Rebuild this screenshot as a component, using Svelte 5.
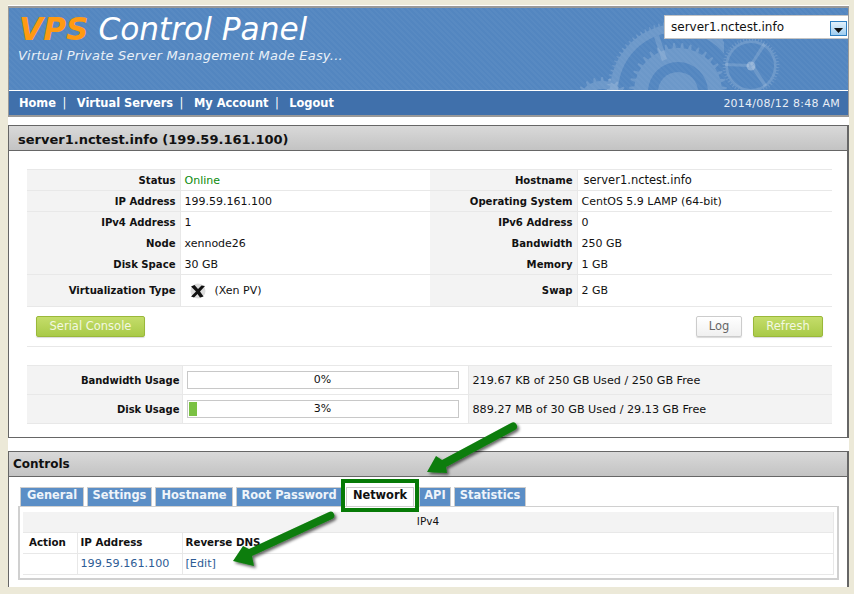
<script>
  const info = [
    { a: 'Status', b: 'Online', c: 'Hostname', d: 'server1.nctest.info', line: true, online: true, wide: true },
    { a: 'IP Address', b: '199.59.161.100', c: 'Operating System', d: 'CentOS 5.9 LAMP (64-bit)', line: true },
    { a: 'IPv4 Address', b: '1', c: 'IPv6 Address', d: '0' },
    { a: 'Node', b: 'xennode26', c: 'Bandwidth', d: '250 GB' },
    { a: 'Disk Space', b: '30 GB', c: 'Memory', d: '1 GB', line: true }
  ];

  const usage = [
    { label: 'Bandwidth Usage', pct: 0, text: '219.67 KB of 250 GB Used / 250 GB Free' },
    { label: 'Disk Usage', pct: 3, text: '889.27 MB of 30 GB Used / 29.13 GB Free' }
  ];

  const tabs = [
    { name: 'General', width: 64 },
    { name: 'Settings', width: 65 },
    { name: 'Hostname', width: 78 },
    { name: 'Root Password', width: 106 },
    { name: 'Network', width: 68 },
    { name: 'API', width: 32 },
    { name: 'Statistics', width: 72 }
  ];

  // toothed outline with a round hole, for the header watermark
  function gear(cx, cy, r, teeth, h, hole) {
    let d = '';
    const step = (Math.PI * 2) / teeth;
    for (let i = 0; i < teeth; i++) {
      const a = i * step;
      const pts = [
        [r - h, a],
        [r - h, a + step * 0.3],
        [r, a + step * 0.42],
        [r, a + step * 0.62],
        [r - h, a + step * 0.74]
      ];
      for (const [rad, t] of pts) {
        d += (d ? 'L' : 'M') + (cx + rad * Math.cos(t)).toFixed(1) + ' ' + (cy + rad * Math.sin(t)).toFixed(1);
      }
    }
    d += 'Z';
    d += `M${cx + hole} ${cy}A${hole} ${hole} 0 1 0 ${cx - hole} ${cy}A${hole} ${hole} 0 1 0 ${cx + hole} ${cy}Z`;
    return d;
  }
</script>

<div class="page">
  <header class="site-head">
    <div class="banner">
      <svg class="gears" width="839" height="82" viewBox="0 0 839 82" aria-hidden="true">
        <defs>
          <clipPath id="ring-clip"><rect x="560" y="0" width="164" height="100" /></clipPath>
        </defs>
        <g transform="translate(-9 -8)" fill="#fff" fill-opacity="0.15" fill-rule="evenodd">
          <path d={gear(678, 92, 71, 90, 3, 60)} clip-path="url(#ring-clip)" />
          <path d="M654 37l5-2 8 24-5 2z" />
          <path d={gear(678, 92, 49, 36, 5, 30)} />
          <circle cx="678" cy="92" r="20" />
          <path d={gear(602, 106, 29, 22, 4, 17)} />
          <path d={gear(751, 66, 28.5, 56, 3, 23)} />
          <circle cx="751" cy="66" r="4.5" fill-opacity="0.3" />
          <path d="M750 64l13-21 3 2-14 21z M725 63l24 1v3l-24-1z M751 67l3-2 13 20-3 2z" />
        </g>
      </svg>
      <h1 class="brand"><b>VPS</b> Control Panel</h1>
      <p class="tagline">Virtual Private Server Management Made Easy...</p>
      <div class="server-select">
        <span>server1.nctest.info</span>
        <i class="select-btn"><svg width="9" height="5" viewBox="0 0 9 5"><path d="M0 0h9L4.500 5z" fill="#111" /></svg></i>
      </div>
    </div>
    <nav class="topnav">
      <div class="links">
        <a href="#home">Home</a><span>|</span>
        <a href="#servers">Virtual Servers</a><span>|</span>
        <a href="#account">My Account</a><span>|</span>
        <a href="#logout">Logout</a>
      </div>
      <div class="clock">2014/08/12 8:48 AM</div>
    </nav>
  </header>

  <section class="panel server">
    <h2 class="panel-title big">server1.nctest.info (199.59.161.100)</h2>
    <div class="panel-body">
      <table class="info">
        <colgroup><col style="width: 153px" /><col style="width: 250px" /><col style="width: 147px" /><col /></colgroup>
        <tbody>
          {#each info as row}
            <tr class:line={row.line}>
              <th>{row.a}</th>
              <td class="mid" class:online={row.online}>{row.b}</td>
              <th>{row.c}</th>
              <td class:host={row.wide}>{row.d}</td>
            </tr>
          {/each}
          <tr class="line tall">
            <th>Virtualization Type</th>
            <td class="mid">
              <span class="virt">
                <svg width="16" height="16" viewBox="0 0 16 16" aria-hidden="true">
                  <circle cx="8" cy="8" r="7.500" fill="#ddd" />
                  <path d="M1 3.500 4.500 2 8 6l3.500-3.500L15 3l-5 5.500 3.500 5-3.500 1L7.500 11l-3.500 3.500-3-1 5-5z" fill="#111" />
                </svg>
                (Xen PV)
              </span>
            </td>
            <th>Swap</th>
            <td>2 GB</td>
          </tr>
        </tbody>
      </table>

      <div class="actions">
        <button class="btn green serial">Serial Console</button>
        <span class="spacer"></span>
        <button class="btn plain">Log</button>
        <button class="btn green refresh">Refresh</button>
      </div>

      <table class="usage">
        <colgroup><col style="width: 155px" /><col style="width: 286px" /><col /></colgroup>
        <tbody>
          {#each usage as u}
            <tr>
              <th>{u.label}</th>
              <td class="bar-cell">
                <div class="bar">
                  {#if u.pct > 0}<div class="fill" style="width: {u.pct}%"></div>{/if}
                  <span>{u.pct}%</span>
                </div>
              </td>
              <td class="used">{u.text}</td>
            </tr>
          {/each}
        </tbody>
      </table>
    </div>
  </section>

  <section class="panel controls">
    <h2 class="panel-title">Controls</h2>
    <div class="panel-body">
      <div class="tabs">
        {#each tabs as tab}
          <button class="tab" class:active={tab.name === 'Network'} style="width: {tab.width}px">{tab.name}</button>
        {/each}
      </div>
      <div class="tab-box">
        <table class="net">
          <colgroup><col style="width: 54px" /><col style="width: 105px" /><col /></colgroup>
          <tbody>
            <tr class="caption"><td colspan="3">IPv4</td></tr>
            <tr class="heads"><th class="c1">Action</th><th class="c2">IP Address</th><th>Reverse DNS</th></tr>
            <tr>
              <td class="c1"></td>
              <td class="c2"><a href="#ip">199.59.161.100</a></td>
              <td><a href="#edit">[Edit]</a></td>
            </tr>
          </tbody>
        </table>
      </div>
    </div>
  </section>

  <!-- annotations drawn on top of the screenshot -->
  <svg class="marks" width="854" height="594" viewBox="0 0 854 594" aria-hidden="true">
    <defs>
      <filter id="shade" x="-20%" y="-20%" width="140%" height="140%">
        <feDropShadow dx="2" dy="2" stdDeviation="1.500" flood-color="#000" flood-opacity="0.6" />
      </filter>
    </defs>
    <rect x="343" y="481" width="74" height="29" fill="none" stroke="#067a06" stroke-width="4" />
    <g fill="#0a7d0a" filter="url(#shade)">
      <path d="M427 472L436 456L442 460L511 423A3.600 3.600 0 0 1 515 430L446 467L447 473Z" />
      <path d="M233 561L243 546L249 549L329 512A3.600 3.600 0 0 1 332 519L252 556L254 566Z" />
    </g>
  </svg>
</div>

<style>
  :global(body) {
    background: #ece9d8;
    font-family: "DejaVu Sans", Verdana, sans-serif;
    font-size: 11px;
    color: #111;
  }

  .page {
    position: relative;
    box-sizing: border-box;
    width: 841px;
    height: 582px;
    margin: 5px 0 0 8px;
    padding-top: 1px;
    background: #fff;
    overflow: hidden;
  }

  .site-head {
    width: 841px;
    box-sizing: border-box;
    border: 1px solid #999;
    border-width: 2px 1px;
  }

  .banner {
    position: relative;
    box-sizing: border-box;
    height: 83px;
    padding: 7px 0 0 9px;
    overflow: hidden;
    border-bottom: 1px solid #fff;
    background-color: #5386c0;
    background-image: repeating-linear-gradient(45deg, transparent 0 2px, rgba(255, 255, 255, 0.03) 2px 4px);
  }

  .gears {
    position: absolute;
    left: 0;
    top: 0;
  }

  .brand {
    position: relative;
    margin: 0 0 0 1px;
    font-size: 31.2px;
    line-height: 28px;
    font-weight: normal;
    font-style: italic;
    color: #fff;
  }

  .brand b {
    color: #ff9a12;
  }

  .tagline {
    position: relative;
    margin: 5px 0 0;
    font-size: 13px;
    line-height: 16px;
    letter-spacing: 0.22px;
    font-style: italic;
    color: #e9f0f8;
  }

  .server-select {
    position: absolute;
    right: 0;
    top: 7px;
    box-sizing: border-box;
    display: flex;
    justify-content: space-between;
    width: 184px;
    height: 24px;
    padding: 3px 0 0 6px;
    border: 1px solid #c4c4c4;
    border-right: 0;
    background: #fff;
    font-size: 12px;
    line-height: 16px;
    color: #111;
  }

  .select-btn {
    display: flex;
    align-items: flex-end;
    justify-content: center;
    box-sizing: border-box;
    width: 17px;
    height: 15px;
    margin: 2px 1px 0 0;
    padding-bottom: 2px;
    border: 1px solid #2f7fc1;
    background: linear-gradient(#e3f1fb, #9fcdf0);
  }

  .topnav {
    display: flex;
    align-items: center;
    justify-content: space-between;
    height: 24px;
    padding: 0 8px 0 10px;
    background: #4070ab;
    color: #fff;
  }

  .links {
    font-weight: bold;
    font-size: 11.4px;
  }

  .links a {
    color: #fff;
    text-decoration: none;
  }

  .links span {
    margin: 0 6.5px;
    font-weight: normal;
  }

  .clock {
    font-size: 11px;
    letter-spacing: 0.25px;
    color: #e8eef6;
  }

  .panel {
    box-sizing: border-box;
    width: 841px;
    border: 1px solid #666;
    border-width: 1px 2px 1px 1px;
  }

  .server {
    height: 313px;
    margin-top: 8px;
  }

  .controls {
    height: 137px;
    margin-top: 13px;
    border-bottom: 0;
  }

  .panel-title {
    box-sizing: border-box;
    height: 25px;
    margin: 0;
    padding: 1px 0 0 4px;
    border-bottom: 1px solid #666;
    background: linear-gradient(#d9d9d9, #c3c3c3);
    font-size: 12px;
    line-height: 23px;
    font-weight: bold;
    color: #111;
  }

  .panel-title.big {
    padding: 2px 0 0 9px;
    font-size: 13px;
  }

  .panel-body {
    position: relative;
  }

  table {
    border-collapse: collapse;
    table-layout: fixed;
  }

  .info {
    width: 805px;
    margin: 18px 0 0 18px;
    border-top: 1px solid #e8e8e8;
  }

  .info th,
  .info td {
    height: 21px;
    padding: 0 0 0 4px;
    font-size: 11px;
    line-height: 13px;
  }

  .info tr.line th,
  .info tr.line td {
    height: 20px;
    border-bottom: 1px solid #e8e8e8;
  }

  .info tr.tall th,
  .info tr.tall td {
    height: 31px;
  }

  .info th {
    padding: 0 4px 0 0;
    font-size: 10.1px;
    text-align: right;
    background: #f3f3f3;
    border-right: 1px solid #e8e8e8;
  }

  .info td.online {
    color: #0d8a0d;
  }

  .info td.host {
    padding-left: 6px;
    font-size: 11.500px;
  }

  .virt {
    display: flex;
    align-items: center;
    gap: 9px;
    margin-left: 5px;
  }

  .actions {
    display: flex;
    align-items: flex-start;
    gap: 11px;
    box-sizing: border-box;
    height: 40px;
    margin: 0 0 0 18px;
    width: 805px;
    padding: 9px 9px 0 9px;
    border-bottom: 1px solid #e8e8e8;
  }

  .spacer {
    flex: 1;
  }

  .btn {
    box-sizing: border-box;
    height: 21px;
    padding: 0 0 1px;
    border-radius: 2px;
    font-family: inherit;
    font-size: 11.5px;
    line-height: 18px;
    box-shadow: 0 1px 1px rgba(0, 0, 0, 0.15);
  }

  .btn.green {
    border: 1px solid #9ab83a;
    background: linear-gradient(#c4dd6a, #a9ca48);
    color: #f3f8e2;
  }

  .btn.plain {
    border: 1px solid #ccc;
    background: linear-gradient(#fff, #f0f0f0);
    color: #666;
    width: 46px;
  }

  .serial {
    width: 109px;
  }

  .refresh {
    width: 70px;
  }

  .usage {
    width: 805px;
    margin: 18px 0 0 18px;
    border-top: 1px solid #e8e8e8;
    border-bottom: 1px solid #e8e8e8;
    background: #f3f3f3;
  }

  .usage tr + tr {
    border-top: 1px solid #e8e8e8;
  }

  .usage th,
  .usage td {
    height: 28px;
    padding: 0;
    font-size: 11.2px;
  }

  .usage th {
    padding-right: 2px;
    font-size: 10px;
    text-align: right;
    border-right: 1px solid #e8e8e8;
  }

  .bar-cell {
    background: #fff;
    border-right: 1px solid #e8e8e8;
  }

  .bar {
    position: relative;
    box-sizing: border-box;
    width: 272px;
    height: 18px;
    margin-left: 4px;
    padding: 1px;
    border: 1px solid #c8c8c8;
    background: #fff;
    text-align: center;
    line-height: 14px;
  }

  .fill {
    height: 14px;
    background: #7ac143;
  }

  .bar span {
    position: absolute;
    left: 0;
    right: 0;
    top: 1px;
    font-size: 11px;
  }

  .usage .used {
    padding-left: 4px;
  }

  .tabs {
    display: flex;
    gap: 3px;
    padding: 10px 0 0 11px;
    height: 19px;
    align-items: flex-end;
  }

  .tab {
    box-sizing: border-box;
    height: 19px;
    padding: 0 0 3px;
    border: 1px solid #ccc;
    border-bottom: 0;
    background: #5b8ec6;
    font-family: inherit;
    font-size: 11.4px;
    font-weight: bold;
    line-height: 15px;
    color: #eef4fa;
    white-space: nowrap;
  }

  .tab.active {
    margin: 0 2px 0 1px;
    background: #fff;
    color: #111;
  }

  .tab-box {
    box-sizing: border-box;
    width: 821px;
    height: 74px;
    margin-left: 9px;
    padding: 4px 3px 0 3px;
    border: 2px solid #d0d0d0;
    border-top-width: 1px;
    background: #fff;
  }

  .net {
    width: 811px;
    margin-top: 1px;
    border-right: 1px solid #e8e8e8;
    border-bottom: 1px solid #e8e8e8;
  }

  .net td,
  .net th {
    height: 18px;
    padding: 0 0 2px 3px;
    font-size: 11.2px;
    text-align: left;
    border-bottom: 1px solid #e8e8e8;
  }

  .net th {
    font-size: 10.3px;
  }

  .net .c1 {
    padding-left: 6px;
    border-right: 1px solid #e8e8e8;
  }

  .net .c2 {
    padding-left: 3px;
    border-right: 1px solid #e8e8e8;
  }

  .net a {
    color: #2e5c95;
    text-decoration: none;
  }

  .net .caption td {
    padding: 0 0 2px;
    background: #f3f3f3;
    font-size: 10.5px;
    text-align: center;
  }

  .marks {
    position: absolute;
    left: -8px;
    top: -5px;
    pointer-events: none;
  }
</style>
